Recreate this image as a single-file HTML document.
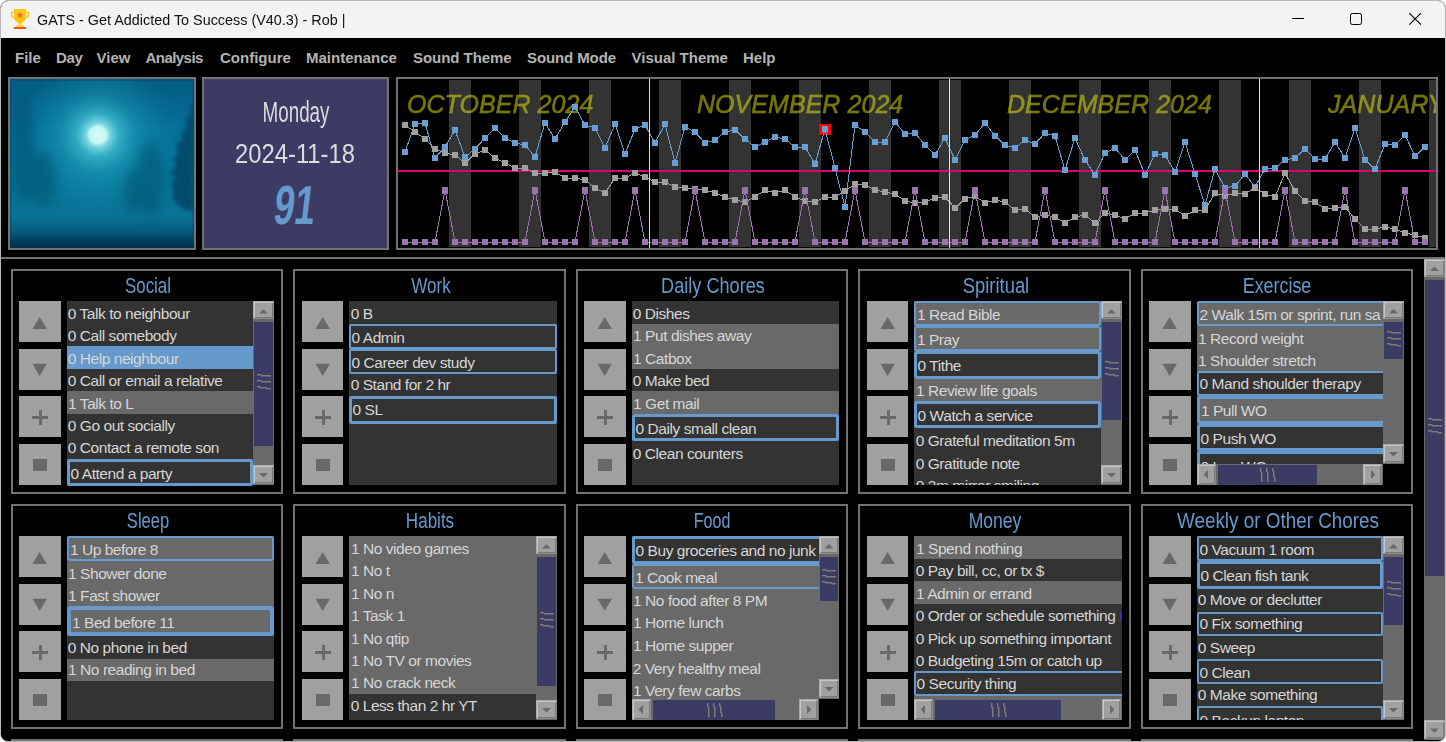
<!DOCTYPE html><html><head><meta charset="utf-8"><title>GATS</title><style>
html,body{margin:0;padding:0;}
body{width:1446px;height:742px;overflow:hidden;background:#fff;font-family:"Liberation Sans",sans-serif;position:relative;}
#win{position:absolute;left:0;top:0;width:1444px;height:740px;border:1px solid #b9b9b9;border-radius:8px;overflow:hidden;background:#000;}
#in{position:absolute;left:-1px;top:-1px;width:1446px;height:742px;}
.abs{position:absolute;}
#tb{position:absolute;left:0;top:0;width:1446px;height:38px;background:#f3f3f3;}
#title{position:absolute;left:37px;top:10.6px;font-size:15.4px;color:#111;white-space:nowrap;line-height:18px;transform:scaleX(.934);transform-origin:0 0;}
.menu{position:absolute;top:49px;font-weight:bold;font-size:15px;color:#b4b4b4;line-height:18px;white-space:nowrap;}
.box{position:absolute;box-sizing:border-box;border:2px solid #727272;}
.panel{position:absolute;box-sizing:border-box;border:2px solid #727272;}
.pt{position:absolute;color:#6699cc;font-size:22.5px;line-height:26px;white-space:nowrap;text-align:center;width:300px;margin-left:-150px;}
.btn{position:absolute;background:#a0a0a0;}
.list{position:absolute;overflow:hidden;background:#333;}
.it{position:absolute;box-sizing:border-box;}
.tx{position:absolute;white-space:nowrap;font-size:15.5px;line-height:17px;letter-spacing:-0.45px;color:#d6d6d6;}
.g{background:#696969;}
.d{background:#333;}
.s{background:#6699cc;}
.bx{border-style:solid;border-color:#6699cc;border-radius:2px;}
.sb{position:absolute;background:#696969;}
.sbb{position:absolute;box-sizing:border-box;background:#a0a0a0;border:1px solid;border-color:#aaa #8c8c8c #8c8c8c #aaa;box-shadow:inset 1px 1px 0 #c6c6c6,inset -1px -1px 0 #7a7a7a;}
.th{position:absolute;background:#3c3b64;}
</style></head><body><div id="win"><div id="in">
<div id="tb"></div>
<div id="title">GATS - Get Addicted To Success (V40.3) - Rob |</div>
<svg class="abs" style="left:10px;top:8px" width="20" height="22" viewBox="0 0 20 22">
<path d="M4 1h12v8.500c0 1.500-1 3-4.200 5.800h-3.600C5 12.500 4 11 4 9.500z" fill="#fbc710"/>
<path d="M4 4.500H1.500v2.500c0 1.500 1 2.500 2.500 2.500M16 4.500h2.500v2.500c0 1.500-1 2.500-2.500 2.500" fill="none" stroke="#fbc710" stroke-width="1.300"/>
<rect x="9" y="15" width="2" height="2.500" fill="#fbc710"/>
<rect x="6" y="17" width="8" height="2" fill="#fdd835"/>
<rect x="4" y="19" width="12" height="2" fill="#f4511e"/>
<path d="M10 4l1 2.100 2.200.2-1.700 1.500.6 2.200L10 8.800 7.900 10l.6-2.200L6.800 6.300l2.200-.2z" fill="#f4622a"/>
</svg>
<svg class="abs" style="left:1280px;top:0" width="166" height="38" viewBox="0 0 166 38">
<path d="M12 18.500h12" stroke="#000" stroke-width="1" fill="none"/>
<rect x="70.500" y="13.500" width="11" height="11" rx="1.800" fill="none" stroke="#000" stroke-width="1"/>
<path d="M129.300 13.100l11.600 11.600M140.900 13.100l-11.600 11.600" stroke="#000" stroke-width="1.100" fill="none"/>
</svg>
<div class="menu" style="left:15px;letter-spacing:0px">File</div>
<div class="menu" style="left:56px;letter-spacing:-0.3px">Day</div>
<div class="menu" style="left:96.5px;letter-spacing:0px">View</div>
<div class="menu" style="left:145.5px;letter-spacing:-0.55px">Analysis</div>
<div class="menu" style="left:220px;letter-spacing:0px">Configure</div>
<div class="menu" style="left:306px;letter-spacing:0px">Maintenance</div>
<div class="menu" style="left:413px;letter-spacing:-0.05px">Sound Theme</div>
<div class="menu" style="left:527px;letter-spacing:-0.1px">Sound Mode</div>
<div class="menu" style="left:631.5px;letter-spacing:0px">Visual Theme</div>
<div class="menu" style="left:743px;letter-spacing:0px">Help</div>
<div class="box" style="left:8px;top:77px;width:188px;height:173px;overflow:hidden;background:#0a5a78"><svg class="abs" style="left:0;top:0" width="184" height="169" viewBox="0 0 184 169">
<defs>
<linearGradient id="sky" x1="0" y1="0" x2="0" y2="1">
<stop offset="0" stop-color="#045a82"/><stop offset=".3" stop-color="#06709a"/><stop offset=".6" stop-color="#08769a"/><stop offset=".82" stop-color="#097296"/><stop offset=".9" stop-color="#065c80"/><stop offset=".95" stop-color="#044262"/><stop offset="1" stop-color="#032b48"/>
</linearGradient>
<radialGradient id="glow" cx="88" cy="56" r="80" gradientUnits="userSpaceOnUse">
<stop offset="0" stop-color="#d8fbfb"/><stop offset=".105" stop-color="#c4f4f4"/><stop offset=".15" stop-color="#7fdbe3" stop-opacity=".95"/><stop offset=".27" stop-color="#3fbfd2" stop-opacity=".75"/><stop offset=".5" stop-color="#1ea5be" stop-opacity=".42"/><stop offset="1" stop-color="#0a88a4" stop-opacity="0"/>
</radialGradient>
<filter id="bl" x="-30%" y="-30%" width="160%" height="160%"><feGaussianBlur stdDeviation="5"/></filter>
<filter id="bl2" x="-30%" y="-30%" width="160%" height="160%"><feGaussianBlur stdDeviation="2.200"/></filter>
</defs>
<rect width="184" height="169" fill="url(#sky)"/>
<rect width="184" height="169" fill="url(#glow)"/>
<g filter="url(#bl)" fill="#04506c" opacity=".5">
<ellipse cx="12" cy="70" rx="13" ry="55"/><ellipse cx="32" cy="100" rx="14" ry="28"/>
<ellipse cx="140" cy="100" rx="14" ry="38"/><ellipse cx="122" cy="112" rx="8" ry="22"/>
</g>
<g filter="url(#bl2)" fill="#033a58" opacity=".7">
<path d="M184 22l-5 9 3 2-7 10 4 2-9 11 4 2-9 11 5 3-8 10 5 3-7 10 5 2-4 10 3 4-2 8c6 8 14 14 22 12z"/>
</g>
<rect x="0" y="0" width="184" height="169" fill="none" stroke="#03405c" stroke-opacity=".3" stroke-width="4"/>
</svg>
</div>
<div class="box" style="left:202px;top:77px;width:187px;height:173px;background:#3c3b64"></div>
<div class="abs" style="left:95.5px;top:97.11px;width:400px;text-align:center;white-space:nowrap;font-size:30px;line-height:30px;color:#dcdcdc;font-weight:normal;transform:scaleX(0.628);transform-origin:50% 50%">Monday</div>
<div class="abs" style="left:95px;top:140.64px;width:400px;text-align:center;white-space:nowrap;font-size:27px;line-height:27px;color:#dcdcdc;font-weight:normal;transform:scaleX(0.882);transform-origin:50% 50%">2024-11-18</div>
<div class="abs" style="left:95px;top:178.44px;width:400px;text-align:center;white-space:nowrap;font-size:55px;line-height:55px;color:#6699cc;font-weight:bold;transform:skewX(-7deg) scaleX(0.670);transform-origin:50% 50%">91</div>
<div class="box" style="left:396px;top:77px;width:1042px;height:173px;background:#000"></div>
<svg class="abs" style="left:398px;top:79px" width="1038" height="169" viewBox="398 79 1038 169" shape-rendering="crispEdges"><rect x="449" y="80" width="22" height="167" fill="#333"/><rect x="519" y="80" width="22" height="167" fill="#333"/><rect x="589" y="80" width="22" height="167" fill="#333"/><rect x="659" y="80" width="22" height="167" fill="#333"/><rect x="729" y="80" width="22" height="167" fill="#333"/><rect x="799" y="80" width="22" height="167" fill="#333"/><rect x="869" y="80" width="22" height="167" fill="#333"/><rect x="939" y="80" width="22" height="167" fill="#333"/><rect x="1009" y="80" width="22" height="167" fill="#333"/><rect x="1079" y="80" width="22" height="167" fill="#333"/><rect x="1149" y="80" width="22" height="167" fill="#333"/><rect x="1219" y="80" width="22" height="167" fill="#333"/><rect x="1289" y="80" width="22" height="167" fill="#333"/><rect x="1359" y="80" width="22" height="167" fill="#333"/><rect x="1429" y="80" width="7" height="167" fill="#333"/><text x="407" y="113" font-family="Liberation Sans, sans-serif" font-style="italic" font-size="25" letter-spacing="0.05" fill="#ffff00" stroke="#ffff00" stroke-width="0.45" opacity="0.47" shape-rendering="auto">OCTOBER 2024</text><text x="697" y="113" font-family="Liberation Sans, sans-serif" font-style="italic" font-size="25" letter-spacing="0.05" fill="#ffff00" stroke="#ffff00" stroke-width="0.45" opacity="0.47" shape-rendering="auto">NOVEMBER 2024</text><text x="1007" y="113" font-family="Liberation Sans, sans-serif" font-style="italic" font-size="25" letter-spacing="0.05" fill="#ffff00" stroke="#ffff00" stroke-width="0.45" opacity="0.47" shape-rendering="auto">DECEMBER 2024</text><text x="1328" y="113" font-family="Liberation Sans, sans-serif" font-style="italic" font-size="25" letter-spacing="0.05" fill="#ffff00" stroke="#ffff00" stroke-width="0.45" opacity="0.47" shape-rendering="auto">JANUARY 2025</text><rect x="398" y="170" width="1038" height="2" fill="#d6006e"/><rect x="819" y="124" width="12" height="11" fill="#f00"/><polyline points="405,152 415,124 425,123 435,158 445,147 455,130 465,157 475,149 485,138 495,128 505,138 515,143 525,145 535,157 545,123 555,139 565,122 575,107 585,125 595,128 605,148 615,124 625,154 635,129 645,125 655,143 665,124 675,163 685,127 695,132 705,143 715,140 725,132 735,130 745,139 755,147 765,142 775,137 785,139 795,147 805,147 815,164 825,129 835,168 845,207 855,125 865,132 875,142 885,142 895,122 905,134 915,133 925,145 935,155 945,138 955,160 965,140 975,135 985,123 995,136 1005,145 1015,148 1025,140 1035,144 1045,133 1055,136 1065,170 1075,138 1085,160 1095,175 1105,153 1115,148 1125,160 1135,150 1145,175 1155,154 1165,155 1175,172 1185,142 1195,174 1205,205 1215,169 1225,188 1235,186 1245,174 1255,187 1265,169 1275,168 1285,160 1295,158 1305,149 1315,159 1325,159 1335,142 1345,158 1355,128 1365,160 1375,169 1385,144 1395,145 1405,135 1415,156 1425,147" fill="none" stroke="#689ed1" stroke-width="1"/><rect x="402" y="149" width="6" height="6" fill="#689ed1"/><rect x="412" y="121" width="6" height="6" fill="#689ed1"/><rect x="422" y="120" width="6" height="6" fill="#689ed1"/><rect x="432" y="155" width="6" height="6" fill="#689ed1"/><rect x="442" y="144" width="6" height="6" fill="#689ed1"/><rect x="452" y="127" width="6" height="6" fill="#689ed1"/><rect x="462" y="154" width="6" height="6" fill="#689ed1"/><rect x="472" y="146" width="6" height="6" fill="#689ed1"/><rect x="482" y="135" width="6" height="6" fill="#689ed1"/><rect x="492" y="125" width="6" height="6" fill="#689ed1"/><rect x="502" y="135" width="6" height="6" fill="#689ed1"/><rect x="512" y="140" width="6" height="6" fill="#689ed1"/><rect x="522" y="142" width="6" height="6" fill="#689ed1"/><rect x="532" y="154" width="6" height="6" fill="#689ed1"/><rect x="542" y="120" width="6" height="6" fill="#689ed1"/><rect x="552" y="136" width="6" height="6" fill="#689ed1"/><rect x="562" y="119" width="6" height="6" fill="#689ed1"/><rect x="572" y="104" width="6" height="6" fill="#689ed1"/><rect x="582" y="122" width="6" height="6" fill="#689ed1"/><rect x="592" y="125" width="6" height="6" fill="#689ed1"/><rect x="602" y="145" width="6" height="6" fill="#689ed1"/><rect x="612" y="121" width="6" height="6" fill="#689ed1"/><rect x="622" y="151" width="6" height="6" fill="#689ed1"/><rect x="632" y="126" width="6" height="6" fill="#689ed1"/><rect x="642" y="122" width="6" height="6" fill="#689ed1"/><rect x="652" y="140" width="6" height="6" fill="#689ed1"/><rect x="662" y="121" width="6" height="6" fill="#689ed1"/><rect x="672" y="160" width="6" height="6" fill="#689ed1"/><rect x="682" y="124" width="6" height="6" fill="#689ed1"/><rect x="692" y="129" width="6" height="6" fill="#689ed1"/><rect x="702" y="140" width="6" height="6" fill="#689ed1"/><rect x="712" y="137" width="6" height="6" fill="#689ed1"/><rect x="722" y="129" width="6" height="6" fill="#689ed1"/><rect x="732" y="127" width="6" height="6" fill="#689ed1"/><rect x="742" y="136" width="6" height="6" fill="#689ed1"/><rect x="752" y="144" width="6" height="6" fill="#689ed1"/><rect x="762" y="139" width="6" height="6" fill="#689ed1"/><rect x="772" y="134" width="6" height="6" fill="#689ed1"/><rect x="782" y="136" width="6" height="6" fill="#689ed1"/><rect x="792" y="144" width="6" height="6" fill="#689ed1"/><rect x="802" y="144" width="6" height="6" fill="#689ed1"/><rect x="812" y="161" width="6" height="6" fill="#689ed1"/><rect x="822" y="126" width="6" height="6" fill="#689ed1"/><rect x="832" y="165" width="6" height="6" fill="#689ed1"/><rect x="842" y="204" width="6" height="6" fill="#689ed1"/><rect x="852" y="122" width="6" height="6" fill="#689ed1"/><rect x="862" y="129" width="6" height="6" fill="#689ed1"/><rect x="872" y="139" width="6" height="6" fill="#689ed1"/><rect x="882" y="139" width="6" height="6" fill="#689ed1"/><rect x="892" y="119" width="6" height="6" fill="#689ed1"/><rect x="902" y="131" width="6" height="6" fill="#689ed1"/><rect x="912" y="130" width="6" height="6" fill="#689ed1"/><rect x="922" y="142" width="6" height="6" fill="#689ed1"/><rect x="932" y="152" width="6" height="6" fill="#689ed1"/><rect x="942" y="135" width="6" height="6" fill="#689ed1"/><rect x="952" y="157" width="6" height="6" fill="#689ed1"/><rect x="962" y="137" width="6" height="6" fill="#689ed1"/><rect x="972" y="132" width="6" height="6" fill="#689ed1"/><rect x="982" y="120" width="6" height="6" fill="#689ed1"/><rect x="992" y="133" width="6" height="6" fill="#689ed1"/><rect x="1002" y="142" width="6" height="6" fill="#689ed1"/><rect x="1012" y="145" width="6" height="6" fill="#689ed1"/><rect x="1022" y="137" width="6" height="6" fill="#689ed1"/><rect x="1032" y="141" width="6" height="6" fill="#689ed1"/><rect x="1042" y="130" width="6" height="6" fill="#689ed1"/><rect x="1052" y="133" width="6" height="6" fill="#689ed1"/><rect x="1062" y="167" width="6" height="6" fill="#689ed1"/><rect x="1072" y="135" width="6" height="6" fill="#689ed1"/><rect x="1082" y="157" width="6" height="6" fill="#689ed1"/><rect x="1092" y="172" width="6" height="6" fill="#689ed1"/><rect x="1102" y="150" width="6" height="6" fill="#689ed1"/><rect x="1112" y="145" width="6" height="6" fill="#689ed1"/><rect x="1122" y="157" width="6" height="6" fill="#689ed1"/><rect x="1132" y="147" width="6" height="6" fill="#689ed1"/><rect x="1142" y="172" width="6" height="6" fill="#689ed1"/><rect x="1152" y="151" width="6" height="6" fill="#689ed1"/><rect x="1162" y="152" width="6" height="6" fill="#689ed1"/><rect x="1172" y="169" width="6" height="6" fill="#689ed1"/><rect x="1182" y="139" width="6" height="6" fill="#689ed1"/><rect x="1192" y="171" width="6" height="6" fill="#689ed1"/><rect x="1202" y="202" width="6" height="6" fill="#689ed1"/><rect x="1212" y="166" width="6" height="6" fill="#689ed1"/><rect x="1222" y="185" width="6" height="6" fill="#689ed1"/><rect x="1232" y="183" width="6" height="6" fill="#689ed1"/><rect x="1242" y="171" width="6" height="6" fill="#689ed1"/><rect x="1252" y="184" width="6" height="6" fill="#689ed1"/><rect x="1262" y="166" width="6" height="6" fill="#689ed1"/><rect x="1272" y="165" width="6" height="6" fill="#689ed1"/><rect x="1282" y="157" width="6" height="6" fill="#689ed1"/><rect x="1292" y="155" width="6" height="6" fill="#689ed1"/><rect x="1302" y="146" width="6" height="6" fill="#689ed1"/><rect x="1312" y="156" width="6" height="6" fill="#689ed1"/><rect x="1322" y="156" width="6" height="6" fill="#689ed1"/><rect x="1332" y="139" width="6" height="6" fill="#689ed1"/><rect x="1342" y="155" width="6" height="6" fill="#689ed1"/><rect x="1352" y="125" width="6" height="6" fill="#689ed1"/><rect x="1362" y="157" width="6" height="6" fill="#689ed1"/><rect x="1372" y="166" width="6" height="6" fill="#689ed1"/><rect x="1382" y="141" width="6" height="6" fill="#689ed1"/><rect x="1392" y="142" width="6" height="6" fill="#689ed1"/><rect x="1402" y="132" width="6" height="6" fill="#689ed1"/><rect x="1412" y="153" width="6" height="6" fill="#689ed1"/><rect x="1422" y="144" width="6" height="6" fill="#689ed1"/><polyline points="405,125 415,132 425,139 435,149 445,153 455,155 465,163 475,154 485,150 495,158 505,163 515,168 525,168 535,173 545,173 555,172 565,178 575,178 585,180 595,188 605,193 615,178 625,178 635,173 645,177 655,182 665,182 675,187 685,188 695,189 705,190 715,193 725,197 735,200 745,202 755,197 765,190 775,193 785,190 795,197 805,201 815,202 825,197 835,197 845,191 855,184 865,185 875,190 885,192 895,194 905,201 915,203 925,202 935,198 945,197 955,208 965,199 975,196 985,203 995,200 1005,202 1015,210 1025,209 1035,217 1045,215 1055,217 1065,223 1075,217 1085,215 1095,223 1105,213 1115,215 1125,219 1135,213 1145,213 1155,210 1165,209 1175,209 1185,216 1195,210 1205,210 1215,193 1225,196 1235,193 1245,194 1255,188 1265,194 1275,197 1285,173 1295,191 1305,201 1315,202 1325,209 1335,208 1345,207 1355,219 1365,229 1375,229 1385,227 1395,229 1405,233 1415,235 1425,238" fill="none" stroke="#a0a0a0" stroke-width="1"/><rect x="402" y="122" width="6" height="6" fill="#a0a0a0"/><rect x="412" y="129" width="6" height="6" fill="#a0a0a0"/><rect x="422" y="136" width="6" height="6" fill="#a0a0a0"/><rect x="432" y="146" width="6" height="6" fill="#a0a0a0"/><rect x="442" y="150" width="6" height="6" fill="#a0a0a0"/><rect x="452" y="152" width="6" height="6" fill="#a0a0a0"/><rect x="462" y="160" width="6" height="6" fill="#a0a0a0"/><rect x="472" y="151" width="6" height="6" fill="#a0a0a0"/><rect x="482" y="147" width="6" height="6" fill="#a0a0a0"/><rect x="492" y="155" width="6" height="6" fill="#a0a0a0"/><rect x="502" y="160" width="6" height="6" fill="#a0a0a0"/><rect x="512" y="165" width="6" height="6" fill="#a0a0a0"/><rect x="522" y="165" width="6" height="6" fill="#a0a0a0"/><rect x="532" y="170" width="6" height="6" fill="#a0a0a0"/><rect x="542" y="170" width="6" height="6" fill="#a0a0a0"/><rect x="552" y="169" width="6" height="6" fill="#a0a0a0"/><rect x="562" y="175" width="6" height="6" fill="#a0a0a0"/><rect x="572" y="175" width="6" height="6" fill="#a0a0a0"/><rect x="582" y="177" width="6" height="6" fill="#a0a0a0"/><rect x="592" y="185" width="6" height="6" fill="#a0a0a0"/><rect x="602" y="190" width="6" height="6" fill="#a0a0a0"/><rect x="612" y="175" width="6" height="6" fill="#a0a0a0"/><rect x="622" y="175" width="6" height="6" fill="#a0a0a0"/><rect x="632" y="170" width="6" height="6" fill="#a0a0a0"/><rect x="642" y="174" width="6" height="6" fill="#a0a0a0"/><rect x="652" y="179" width="6" height="6" fill="#a0a0a0"/><rect x="662" y="179" width="6" height="6" fill="#a0a0a0"/><rect x="672" y="184" width="6" height="6" fill="#a0a0a0"/><rect x="682" y="185" width="6" height="6" fill="#a0a0a0"/><rect x="692" y="186" width="6" height="6" fill="#a0a0a0"/><rect x="702" y="187" width="6" height="6" fill="#a0a0a0"/><rect x="712" y="190" width="6" height="6" fill="#a0a0a0"/><rect x="722" y="194" width="6" height="6" fill="#a0a0a0"/><rect x="732" y="197" width="6" height="6" fill="#a0a0a0"/><rect x="742" y="199" width="6" height="6" fill="#a0a0a0"/><rect x="752" y="194" width="6" height="6" fill="#a0a0a0"/><rect x="762" y="187" width="6" height="6" fill="#a0a0a0"/><rect x="772" y="190" width="6" height="6" fill="#a0a0a0"/><rect x="782" y="187" width="6" height="6" fill="#a0a0a0"/><rect x="792" y="194" width="6" height="6" fill="#a0a0a0"/><rect x="802" y="198" width="6" height="6" fill="#a0a0a0"/><rect x="812" y="199" width="6" height="6" fill="#a0a0a0"/><rect x="822" y="194" width="6" height="6" fill="#a0a0a0"/><rect x="832" y="194" width="6" height="6" fill="#a0a0a0"/><rect x="842" y="188" width="6" height="6" fill="#a0a0a0"/><rect x="852" y="181" width="6" height="6" fill="#a0a0a0"/><rect x="862" y="182" width="6" height="6" fill="#a0a0a0"/><rect x="872" y="187" width="6" height="6" fill="#a0a0a0"/><rect x="882" y="189" width="6" height="6" fill="#a0a0a0"/><rect x="892" y="191" width="6" height="6" fill="#a0a0a0"/><rect x="902" y="198" width="6" height="6" fill="#a0a0a0"/><rect x="912" y="200" width="6" height="6" fill="#a0a0a0"/><rect x="922" y="199" width="6" height="6" fill="#a0a0a0"/><rect x="932" y="195" width="6" height="6" fill="#a0a0a0"/><rect x="942" y="194" width="6" height="6" fill="#a0a0a0"/><rect x="952" y="205" width="6" height="6" fill="#a0a0a0"/><rect x="962" y="196" width="6" height="6" fill="#a0a0a0"/><rect x="972" y="193" width="6" height="6" fill="#a0a0a0"/><rect x="982" y="200" width="6" height="6" fill="#a0a0a0"/><rect x="992" y="197" width="6" height="6" fill="#a0a0a0"/><rect x="1002" y="199" width="6" height="6" fill="#a0a0a0"/><rect x="1012" y="207" width="6" height="6" fill="#a0a0a0"/><rect x="1022" y="206" width="6" height="6" fill="#a0a0a0"/><rect x="1032" y="214" width="6" height="6" fill="#a0a0a0"/><rect x="1042" y="212" width="6" height="6" fill="#a0a0a0"/><rect x="1052" y="214" width="6" height="6" fill="#a0a0a0"/><rect x="1062" y="220" width="6" height="6" fill="#a0a0a0"/><rect x="1072" y="214" width="6" height="6" fill="#a0a0a0"/><rect x="1082" y="212" width="6" height="6" fill="#a0a0a0"/><rect x="1092" y="220" width="6" height="6" fill="#a0a0a0"/><rect x="1102" y="210" width="6" height="6" fill="#a0a0a0"/><rect x="1112" y="212" width="6" height="6" fill="#a0a0a0"/><rect x="1122" y="216" width="6" height="6" fill="#a0a0a0"/><rect x="1132" y="210" width="6" height="6" fill="#a0a0a0"/><rect x="1142" y="210" width="6" height="6" fill="#a0a0a0"/><rect x="1152" y="207" width="6" height="6" fill="#a0a0a0"/><rect x="1162" y="206" width="6" height="6" fill="#a0a0a0"/><rect x="1172" y="206" width="6" height="6" fill="#a0a0a0"/><rect x="1182" y="213" width="6" height="6" fill="#a0a0a0"/><rect x="1192" y="207" width="6" height="6" fill="#a0a0a0"/><rect x="1202" y="207" width="6" height="6" fill="#a0a0a0"/><rect x="1212" y="190" width="6" height="6" fill="#a0a0a0"/><rect x="1222" y="193" width="6" height="6" fill="#a0a0a0"/><rect x="1232" y="190" width="6" height="6" fill="#a0a0a0"/><rect x="1242" y="191" width="6" height="6" fill="#a0a0a0"/><rect x="1252" y="185" width="6" height="6" fill="#a0a0a0"/><rect x="1262" y="191" width="6" height="6" fill="#a0a0a0"/><rect x="1272" y="194" width="6" height="6" fill="#a0a0a0"/><rect x="1282" y="170" width="6" height="6" fill="#a0a0a0"/><rect x="1292" y="188" width="6" height="6" fill="#a0a0a0"/><rect x="1302" y="198" width="6" height="6" fill="#a0a0a0"/><rect x="1312" y="199" width="6" height="6" fill="#a0a0a0"/><rect x="1322" y="206" width="6" height="6" fill="#a0a0a0"/><rect x="1332" y="205" width="6" height="6" fill="#a0a0a0"/><rect x="1342" y="204" width="6" height="6" fill="#a0a0a0"/><rect x="1352" y="216" width="6" height="6" fill="#a0a0a0"/><rect x="1362" y="226" width="6" height="6" fill="#a0a0a0"/><rect x="1372" y="226" width="6" height="6" fill="#a0a0a0"/><rect x="1382" y="224" width="6" height="6" fill="#a0a0a0"/><rect x="1392" y="226" width="6" height="6" fill="#a0a0a0"/><rect x="1402" y="230" width="6" height="6" fill="#a0a0a0"/><rect x="1412" y="232" width="6" height="6" fill="#a0a0a0"/><rect x="1422" y="235" width="6" height="6" fill="#a0a0a0"/><polyline points="405,242 415,242 425,242 435,242 445,190 455,242 465,242 475,242 485,242 495,242 505,242 515,242 525,242 535,190 545,242 555,242 565,242 575,242 585,190 595,242 605,242 615,242 625,242 635,190 645,242 655,242 665,242 675,242 685,242 695,190 705,242 715,242 725,242 735,242 745,190 755,242 765,242 775,242 785,242 795,242 805,190 815,242 825,242 835,242 845,242 855,190 865,242 875,242 885,242 895,242 905,242 915,190 925,242 935,242 945,242 955,242 965,242 975,190 985,242 995,242 1005,242 1015,242 1025,242 1035,242 1045,190 1055,242 1065,242 1075,242 1085,242 1095,242 1105,190 1115,242 1125,242 1135,242 1145,242 1155,242 1165,190 1175,242 1185,242 1195,242 1205,242 1215,242 1225,190 1235,242 1245,242 1255,242 1265,242 1275,242 1285,190 1295,242 1305,242 1315,242 1325,242 1335,242 1345,190 1355,242 1365,242 1375,242 1385,242 1395,242 1405,190 1415,242 1425,242" fill="none" stroke="#9b73af" stroke-width="1"/><rect x="402" y="239" width="6" height="6" fill="#9b73af"/><rect x="412" y="239" width="6" height="6" fill="#9b73af"/><rect x="422" y="239" width="6" height="6" fill="#9b73af"/><rect x="432" y="239" width="6" height="6" fill="#9b73af"/><rect x="442" y="187" width="6" height="7" fill="#9b73af"/><rect x="452" y="239" width="6" height="6" fill="#9b73af"/><rect x="462" y="239" width="6" height="6" fill="#9b73af"/><rect x="472" y="239" width="6" height="6" fill="#9b73af"/><rect x="482" y="239" width="6" height="6" fill="#9b73af"/><rect x="492" y="239" width="6" height="6" fill="#9b73af"/><rect x="502" y="239" width="6" height="6" fill="#9b73af"/><rect x="512" y="239" width="6" height="6" fill="#9b73af"/><rect x="522" y="239" width="6" height="6" fill="#9b73af"/><rect x="532" y="187" width="6" height="7" fill="#9b73af"/><rect x="542" y="239" width="6" height="6" fill="#9b73af"/><rect x="552" y="239" width="6" height="6" fill="#9b73af"/><rect x="562" y="239" width="6" height="6" fill="#9b73af"/><rect x="572" y="239" width="6" height="6" fill="#9b73af"/><rect x="582" y="187" width="6" height="7" fill="#9b73af"/><rect x="592" y="239" width="6" height="6" fill="#9b73af"/><rect x="602" y="239" width="6" height="6" fill="#9b73af"/><rect x="612" y="239" width="6" height="6" fill="#9b73af"/><rect x="622" y="239" width="6" height="6" fill="#9b73af"/><rect x="632" y="187" width="6" height="7" fill="#9b73af"/><rect x="642" y="239" width="6" height="6" fill="#9b73af"/><rect x="652" y="239" width="6" height="6" fill="#9b73af"/><rect x="662" y="239" width="6" height="6" fill="#9b73af"/><rect x="672" y="239" width="6" height="6" fill="#9b73af"/><rect x="682" y="239" width="6" height="6" fill="#9b73af"/><rect x="692" y="187" width="6" height="7" fill="#9b73af"/><rect x="702" y="239" width="6" height="6" fill="#9b73af"/><rect x="712" y="239" width="6" height="6" fill="#9b73af"/><rect x="722" y="239" width="6" height="6" fill="#9b73af"/><rect x="732" y="239" width="6" height="6" fill="#9b73af"/><rect x="742" y="187" width="6" height="7" fill="#9b73af"/><rect x="752" y="239" width="6" height="6" fill="#9b73af"/><rect x="762" y="239" width="6" height="6" fill="#9b73af"/><rect x="772" y="239" width="6" height="6" fill="#9b73af"/><rect x="782" y="239" width="6" height="6" fill="#9b73af"/><rect x="792" y="239" width="6" height="6" fill="#9b73af"/><rect x="802" y="187" width="6" height="7" fill="#9b73af"/><rect x="812" y="239" width="6" height="6" fill="#9b73af"/><rect x="822" y="239" width="6" height="6" fill="#9b73af"/><rect x="832" y="239" width="6" height="6" fill="#9b73af"/><rect x="842" y="239" width="6" height="6" fill="#9b73af"/><rect x="852" y="187" width="6" height="7" fill="#9b73af"/><rect x="862" y="239" width="6" height="6" fill="#9b73af"/><rect x="872" y="239" width="6" height="6" fill="#9b73af"/><rect x="882" y="239" width="6" height="6" fill="#9b73af"/><rect x="892" y="239" width="6" height="6" fill="#9b73af"/><rect x="902" y="239" width="6" height="6" fill="#9b73af"/><rect x="912" y="187" width="6" height="7" fill="#9b73af"/><rect x="922" y="239" width="6" height="6" fill="#9b73af"/><rect x="932" y="239" width="6" height="6" fill="#9b73af"/><rect x="942" y="239" width="6" height="6" fill="#9b73af"/><rect x="952" y="239" width="6" height="6" fill="#9b73af"/><rect x="962" y="239" width="6" height="6" fill="#9b73af"/><rect x="972" y="187" width="6" height="7" fill="#9b73af"/><rect x="982" y="239" width="6" height="6" fill="#9b73af"/><rect x="992" y="239" width="6" height="6" fill="#9b73af"/><rect x="1002" y="239" width="6" height="6" fill="#9b73af"/><rect x="1012" y="239" width="6" height="6" fill="#9b73af"/><rect x="1022" y="239" width="6" height="6" fill="#9b73af"/><rect x="1032" y="239" width="6" height="6" fill="#9b73af"/><rect x="1042" y="187" width="6" height="7" fill="#9b73af"/><rect x="1052" y="239" width="6" height="6" fill="#9b73af"/><rect x="1062" y="239" width="6" height="6" fill="#9b73af"/><rect x="1072" y="239" width="6" height="6" fill="#9b73af"/><rect x="1082" y="239" width="6" height="6" fill="#9b73af"/><rect x="1092" y="239" width="6" height="6" fill="#9b73af"/><rect x="1102" y="187" width="6" height="7" fill="#9b73af"/><rect x="1112" y="239" width="6" height="6" fill="#9b73af"/><rect x="1122" y="239" width="6" height="6" fill="#9b73af"/><rect x="1132" y="239" width="6" height="6" fill="#9b73af"/><rect x="1142" y="239" width="6" height="6" fill="#9b73af"/><rect x="1152" y="239" width="6" height="6" fill="#9b73af"/><rect x="1162" y="187" width="6" height="7" fill="#9b73af"/><rect x="1172" y="239" width="6" height="6" fill="#9b73af"/><rect x="1182" y="239" width="6" height="6" fill="#9b73af"/><rect x="1192" y="239" width="6" height="6" fill="#9b73af"/><rect x="1202" y="239" width="6" height="6" fill="#9b73af"/><rect x="1212" y="239" width="6" height="6" fill="#9b73af"/><rect x="1222" y="187" width="6" height="7" fill="#9b73af"/><rect x="1232" y="239" width="6" height="6" fill="#9b73af"/><rect x="1242" y="239" width="6" height="6" fill="#9b73af"/><rect x="1252" y="239" width="6" height="6" fill="#9b73af"/><rect x="1262" y="239" width="6" height="6" fill="#9b73af"/><rect x="1272" y="239" width="6" height="6" fill="#9b73af"/><rect x="1282" y="187" width="6" height="7" fill="#9b73af"/><rect x="1292" y="239" width="6" height="6" fill="#9b73af"/><rect x="1302" y="239" width="6" height="6" fill="#9b73af"/><rect x="1312" y="239" width="6" height="6" fill="#9b73af"/><rect x="1322" y="239" width="6" height="6" fill="#9b73af"/><rect x="1332" y="239" width="6" height="6" fill="#9b73af"/><rect x="1342" y="187" width="6" height="7" fill="#9b73af"/><rect x="1352" y="239" width="6" height="6" fill="#9b73af"/><rect x="1362" y="239" width="6" height="6" fill="#9b73af"/><rect x="1372" y="239" width="6" height="6" fill="#9b73af"/><rect x="1382" y="239" width="6" height="6" fill="#9b73af"/><rect x="1392" y="239" width="6" height="6" fill="#9b73af"/><rect x="1402" y="187" width="6" height="7" fill="#9b73af"/><rect x="1412" y="239" width="6" height="6" fill="#9b73af"/><rect x="1422" y="239" width="6" height="6" fill="#9b73af"/><rect x="649" y="79" width="1" height="169" fill="#ffff00"/><rect x="949" y="79" width="1" height="169" fill="#ffff00"/><rect x="1259" y="79" width="1" height="169" fill="#ffff00"/></svg>
<div class="abs" style="left:1px;top:257px;width:1444px;height:2px;background:#727272"></div>
<div class="sb" style="left:1424px;top:259px;width:21px;height:481px"></div><div class="sbb" style="left:1424px;top:259px;width:21px;height:18px"></div><div class="sbb" style="left:1424px;top:720px;width:21px;height:19px"></div><div class="th" style="left:1425px;top:280px;width:19px;height:296px"></div><svg class="abs" style="left:1427.5px;top:418.0px" width="14" height="16" viewBox="0 0 14 16"><path d="M0 .75h4.500M4 1.750h10M0 6.750h4.500M4 7.750h10M0 12.750h3.500M3 13.750h7M9.500 14.750h4.500" stroke="#7d7d73" stroke-width="1.500" fill="none"/></svg>
<div class="panel" style="left:11px;top:269px;width:272px;height:225px"></div>
<div class="pt" style="left:148.4px;top:272.9px;transform:scaleX(0.750)">Social</div>
<div class="btn" style="left:19px;top:301px;width:42px;height:41px"></div>
<div class="btn" style="left:19px;top:349px;width:42px;height:41px"></div>
<div class="btn" style="left:19px;top:396px;width:42px;height:41px"></div>
<div class="btn" style="left:19px;top:444px;width:42px;height:41px"></div>


<div class="abs" style="left:32px;top:416px;width:16px;height:3px;background:#696969"></div>
<div class="abs" style="left:38.5px;top:410px;width:3px;height:15px;background:#696969"></div>
<div class="abs" style="left:33px;top:459px;width:14px;height:12px;background:#696969"></div>
<div class="list" style="left:67px;top:301px;width:186px;height:185px">
<div class="it d" style="left:0;top:0.0px;width:186px;height:22.5px"></div>
<div class="it d" style="left:0;top:22.5px;width:186px;height:22.5px"></div>
<div class="it s" style="left:0;top:45.0px;width:186px;height:22.5px"></div>
<div class="it d" style="left:0;top:67.5px;width:186px;height:22.5px"></div>
<div class="it g" style="left:0;top:90.0px;width:186px;height:22.5px"></div>
<div class="it d" style="left:0;top:112.5px;width:186px;height:22.5px"></div>
<div class="it d" style="left:0;top:135.0px;width:186px;height:22.5px"></div>
<div class="it d bx" style="left:0;top:158px;width:186px;height:27px;border-width:3px"></div>
<div class="tx" style="left:0.8px;top:4px">0 Talk to neighbour</div>
<div class="tx" style="left:0.8px;top:26px">0 Call somebody</div>
<div class="tx" style="left:0.8px;top:49px">0 Help neighbour</div>
<div class="tx" style="left:0.8px;top:71px">0 Call or email a relative</div>
<div class="tx" style="left:1.1px;top:94px">1 Talk to L</div>
<div class="tx" style="left:0.8px;top:116px">0 Go out socially</div>
<div class="tx" style="left:0.8px;top:138px">0 Contact a remote son</div>
<div class="tx" style="left:3.6px;top:164px">0 Attend a party</div>
</div>
<div class="sb" style="left:253px;top:301px;width:21px;height:184px"></div><div class="sbb" style="left:253px;top:301px;width:21px;height:18px"></div><div class="sbb" style="left:253px;top:465px;width:21px;height:19px"></div><div class="th" style="left:254px;top:322px;width:19px;height:124px"></div><svg class="abs" style="left:256.5px;top:374.0px" width="14" height="16" viewBox="0 0 14 16"><path d="M0 .75h4.500M4 1.750h10M0 6.750h4.500M4 7.750h10M0 12.750h3.500M3 13.750h7M9.500 14.750h4.500" stroke="#7d7d73" stroke-width="1.500" fill="none"/></svg>
<div class="panel" style="left:293px;top:269px;width:273px;height:225px"></div>
<div class="pt" style="left:431px;top:272.9px;transform:scaleX(0.760)">Work</div>
<div class="btn" style="left:302px;top:301px;width:41px;height:41px"></div>
<div class="btn" style="left:302px;top:349px;width:41px;height:41px"></div>
<div class="btn" style="left:302px;top:396px;width:41px;height:41px"></div>
<div class="btn" style="left:302px;top:444px;width:41px;height:41px"></div>


<div class="abs" style="left:315px;top:416px;width:16px;height:3px;background:#696969"></div>
<div class="abs" style="left:321.5px;top:410px;width:3px;height:15px;background:#696969"></div>
<div class="abs" style="left:316px;top:459px;width:14px;height:12px;background:#696969"></div>
<div class="list" style="left:349px;top:301px;width:208px;height:184px">
<div class="it d" style="left:0;top:0px;width:208px;height:23px"></div>
<div class="it d bx" style="left:0;top:23px;width:208px;height:25px;border-width:2px"></div>
<div class="it d bx" style="left:0;top:48px;width:208px;height:25px;border-width:2px"></div>
<div class="it d" style="left:0;top:73px;width:208px;height:22px"></div>
<div class="it d bx" style="left:0;top:95px;width:208px;height:28px;border-width:3px"></div>
<div class="tx" style="left:1.7px;top:4px">0 B</div>
<div class="tx" style="left:2.6px;top:28px">0 Admin</div>
<div class="tx" style="left:2.6px;top:53px">0 Career dev study</div>
<div class="tx" style="left:1.7px;top:75px">0 Stand for 2 hr</div>
<div class="tx" style="left:3.6px;top:100px">0 SL</div>
</div>
<div class="panel" style="left:576px;top:269px;width:272px;height:225px"></div>
<div class="pt" style="left:712.6px;top:272.9px;transform:scaleX(0.806)">Daily Chores</div>
<div class="btn" style="left:584px;top:301px;width:42px;height:41px"></div>
<div class="btn" style="left:584px;top:349px;width:42px;height:41px"></div>
<div class="btn" style="left:584px;top:396px;width:42px;height:41px"></div>
<div class="btn" style="left:584px;top:444px;width:42px;height:41px"></div>


<div class="abs" style="left:597px;top:416px;width:16px;height:3px;background:#696969"></div>
<div class="abs" style="left:603.5px;top:410px;width:3px;height:15px;background:#696969"></div>
<div class="abs" style="left:598px;top:459px;width:14px;height:12px;background:#696969"></div>
<div class="list" style="left:632px;top:301px;width:207px;height:184px">
<div class="it d" style="left:0;top:0.0px;width:207px;height:22.5px"></div>
<div class="it g" style="left:0;top:22.5px;width:207px;height:22.5px"></div>
<div class="it g" style="left:0;top:45.0px;width:207px;height:22.5px"></div>
<div class="it d" style="left:0;top:67.5px;width:207px;height:22.5px"></div>
<div class="it g" style="left:0;top:90.0px;width:207px;height:22.5px"></div>
<div class="it d bx" style="left:0;top:113px;width:207px;height:27px;border-width:3px"></div>
<div class="it d" style="left:0;top:140px;width:207px;height:23px"></div>
<div class="tx" style="left:0.8px;top:4px">0 Dishes</div>
<div class="tx" style="left:1.1px;top:26px">1 Put dishes away</div>
<div class="tx" style="left:1.1px;top:49px">1 Catbox</div>
<div class="tx" style="left:0.8px;top:71px">0 Make bed</div>
<div class="tx" style="left:1.1px;top:94px">1 Get mail</div>
<div class="tx" style="left:3.6px;top:119px">0 Daily small clean</div>
<div class="tx" style="left:0.8px;top:144px">0 Clean counters</div>
</div>
<div class="panel" style="left:858px;top:269px;width:273px;height:225px"></div>
<div class="pt" style="left:995.5px;top:272.9px;transform:scaleX(0.817)">Spiritual</div>
<div class="btn" style="left:867px;top:301px;width:41px;height:41px"></div>
<div class="btn" style="left:867px;top:349px;width:41px;height:41px"></div>
<div class="btn" style="left:867px;top:396px;width:41px;height:41px"></div>
<div class="btn" style="left:867px;top:444px;width:41px;height:41px"></div>


<div class="abs" style="left:880px;top:416px;width:16px;height:3px;background:#696969"></div>
<div class="abs" style="left:886.5px;top:410px;width:3px;height:15px;background:#696969"></div>
<div class="abs" style="left:881px;top:459px;width:14px;height:12px;background:#696969"></div>
<div class="list" style="left:914px;top:301px;width:187px;height:184px">
<div class="it g bx" style="left:0;top:0px;width:187px;height:25px;border-width:2px"></div>
<div class="it g bx" style="left:0;top:25px;width:187px;height:25px;border-width:2px"></div>
<div class="it d bx" style="left:0;top:50px;width:187px;height:28px;border-width:3px"></div>
<div class="it g" style="left:0;top:78px;width:187px;height:22.5px"></div>
<div class="it d bx" style="left:0;top:100px;width:187px;height:27px;border-width:3px"></div>
<div class="it d" style="left:0;top:127.5px;width:187px;height:22.5px"></div>
<div class="it d" style="left:0;top:150px;width:187px;height:22.5px"></div>
<div class="it d" style="left:0;top:172.5px;width:187px;height:22.5px"></div>
<div class="tx" style="left:2.9px;top:5px">1 Read Bible</div>
<div class="tx" style="left:2.9px;top:30px">1 Pray</div>
<div class="tx" style="left:3.6px;top:56px">0 Tithe</div>
<div class="tx" style="left:2.0px;top:81px">1 Review life goals</div>
<div class="tx" style="left:3.6px;top:106px">0 Watch a service</div>
<div class="tx" style="left:1.7px;top:131px">0 Grateful meditation 5m</div>
<div class="tx" style="left:1.7px;top:154px">0 Gratitude note</div>
<div class="tx" style="left:1.7px;top:176px">0 2m mirror smiling</div>
</div>
<div class="sb" style="left:1101px;top:301px;width:21px;height:184px"></div><div class="sbb" style="left:1101px;top:301px;width:21px;height:18px"></div><div class="sbb" style="left:1101px;top:465px;width:21px;height:19px"></div><div class="th" style="left:1102px;top:322px;width:19px;height:98px"></div><svg class="abs" style="left:1104.5px;top:361.0px" width="14" height="16" viewBox="0 0 14 16"><path d="M0 .75h4.500M4 1.750h10M0 6.750h4.500M4 7.750h10M0 12.750h3.500M3 13.750h7M9.500 14.750h4.500" stroke="#7d7d73" stroke-width="1.500" fill="none"/></svg>
<div class="panel" style="left:1141px;top:269px;width:272px;height:225px"></div>
<div class="pt" style="left:1276.7px;top:272.9px;transform:scaleX(0.795)">Exercise</div>
<div class="btn" style="left:1149px;top:301px;width:42px;height:41px"></div>
<div class="btn" style="left:1149px;top:349px;width:42px;height:41px"></div>
<div class="btn" style="left:1149px;top:396px;width:42px;height:41px"></div>
<div class="btn" style="left:1149px;top:444px;width:42px;height:41px"></div>


<div class="abs" style="left:1162px;top:416px;width:16px;height:3px;background:#696969"></div>
<div class="abs" style="left:1168.5px;top:410px;width:3px;height:15px;background:#696969"></div>
<div class="abs" style="left:1163px;top:459px;width:14px;height:12px;background:#696969"></div>
<div class="list" style="left:1197px;top:301px;width:186px;height:163px">
<div class="it g bx" style="left:0;top:0px;width:226px;height:25px;border-width:2px"></div>
<div class="it g" style="left:0;top:25px;width:186px;height:22.5px"></div>
<div class="it g" style="left:0;top:47.5px;width:186px;height:22.5px"></div>
<div class="it d bx" style="left:0;top:70px;width:226px;height:25px;border-width:2px"></div>
<div class="it g bx" style="left:0;top:95px;width:226px;height:28px;border-width:3px"></div>
<div class="it d bx" style="left:0;top:123px;width:226px;height:27px;border-width:3px"></div>
<div class="it d bx" style="left:0;top:150px;width:226px;height:27px;border-width:3px"></div>
<div class="tx" style="left:2.6px;top:5px">2 Walk 15m or sprint, run sa</div>
<div class="tx" style="left:1.1px;top:29px">1 Record weight</div>
<div class="tx" style="left:1.1px;top:51px">1 Shoulder stretch</div>
<div class="tx" style="left:2.6px;top:74px">0 Mand shoulder therapy</div>
<div class="tx" style="left:3.9px;top:101px">1 Pull WO</div>
<div class="tx" style="left:3.6px;top:129px">0 Push WO</div>
<div class="tx" style="left:3.6px;top:157px">0 Leg WO</div>
</div>
<div class="sb" style="left:1383px;top:301px;width:21px;height:163px"></div><div class="sbb" style="left:1383px;top:301px;width:21px;height:18px"></div><div class="sbb" style="left:1383px;top:444px;width:21px;height:19px"></div><div class="th" style="left:1384px;top:322px;width:19px;height:37px"></div><svg class="abs" style="left:1386.5px;top:330.5px" width="14" height="16" viewBox="0 0 14 16"><path d="M0 .75h4.500M4 1.750h10M0 6.750h4.500M4 7.750h10M0 12.750h3.500M3 13.750h7M9.500 14.750h4.500" stroke="#7d7d73" stroke-width="1.500" fill="none"/></svg>
<div class="sb" style="left:1197px;top:464px;width:186px;height:21px"></div><div class="sbb" style="left:1197px;top:464px;width:19px;height:21px"></div><div class="sbb" style="left:1363px;top:464px;width:19px;height:21px"></div><div class="th" style="left:1218px;top:465px;width:99px;height:20px"></div><svg class="abs" style="left:1260.0px;top:467.5px" width="16" height="14" viewBox="0 0 16 14"><path d="M.75 0v4.500M1.750 4v10M6.750 0v4.500M7.750 4v10M12.750 0v3.500M13.750 3v7M14.750 9.500v4.500" stroke="#7d7d73" stroke-width="1.500" fill="none"/></svg>
<div class="panel" style="left:11px;top:504px;width:272px;height:225px"></div>
<div class="pt" style="left:147.5px;top:507.9px;transform:scaleX(0.735)">Sleep</div>
<div class="btn" style="left:19px;top:536px;width:42px;height:41px"></div>
<div class="btn" style="left:19px;top:584px;width:42px;height:41px"></div>
<div class="btn" style="left:19px;top:631px;width:42px;height:41px"></div>
<div class="btn" style="left:19px;top:679px;width:42px;height:41px"></div>


<div class="abs" style="left:32px;top:651px;width:16px;height:3px;background:#696969"></div>
<div class="abs" style="left:38.5px;top:645px;width:3px;height:15px;background:#696969"></div>
<div class="abs" style="left:33px;top:694px;width:14px;height:12px;background:#696969"></div>
<div class="list" style="left:67px;top:536px;width:207px;height:184px">
<div class="it g bx" style="left:0;top:0px;width:207px;height:25px;border-width:2px"></div>
<div class="it g" style="left:0;top:25px;width:207px;height:22.5px"></div>
<div class="it g" style="left:0;top:47.5px;width:207px;height:22.5px"></div>
<div class="it g bx" style="left:0;top:70px;width:207px;height:30px;border-width:4px"></div>
<div class="it d" style="left:0;top:100px;width:207px;height:23px"></div>
<div class="it g" style="left:0;top:123px;width:207px;height:22px"></div>
<div class="tx" style="left:2.9px;top:5px">1 Up before 8</div>
<div class="tx" style="left:1.1px;top:29px">1 Shower done</div>
<div class="tx" style="left:1.1px;top:51px">1 Fast shower</div>
<div class="tx" style="left:5.0px;top:78px">1 Bed before 11</div>
<div class="tx" style="left:0.8px;top:103px">0 No phone in bed</div>
<div class="tx" style="left:1.1px;top:125px">1 No reading in bed</div>
</div>
<div class="panel" style="left:293px;top:504px;width:273px;height:225px"></div>
<div class="pt" style="left:429.9px;top:507.9px;transform:scaleX(0.757)">Habits</div>
<div class="btn" style="left:302px;top:536px;width:41px;height:41px"></div>
<div class="btn" style="left:302px;top:584px;width:41px;height:41px"></div>
<div class="btn" style="left:302px;top:631px;width:41px;height:41px"></div>
<div class="btn" style="left:302px;top:679px;width:41px;height:41px"></div>


<div class="abs" style="left:315px;top:651px;width:16px;height:3px;background:#696969"></div>
<div class="abs" style="left:321.5px;top:645px;width:3px;height:15px;background:#696969"></div>
<div class="abs" style="left:316px;top:694px;width:14px;height:12px;background:#696969"></div>
<div class="list" style="left:349px;top:536px;width:187px;height:184px">
<div class="it g" style="left:0;top:0.0px;width:187px;height:22.5px"></div>
<div class="it g" style="left:0;top:22.5px;width:187px;height:22.5px"></div>
<div class="it g" style="left:0;top:45.0px;width:187px;height:22.5px"></div>
<div class="it g" style="left:0;top:67.5px;width:187px;height:22.5px"></div>
<div class="it g" style="left:0;top:90.0px;width:187px;height:22.5px"></div>
<div class="it g" style="left:0;top:112.5px;width:187px;height:22.5px"></div>
<div class="it g" style="left:0;top:135.0px;width:187px;height:22.5px"></div>
<div class="it d" style="left:0;top:157.5px;width:187px;height:26.5px"></div>
<div class="tx" style="left:2.0px;top:4px">1 No video games</div>
<div class="tx" style="left:2.0px;top:26px">1 No t</div>
<div class="tx" style="left:2.0px;top:49px">1 No n</div>
<div class="tx" style="left:2.0px;top:71px">1 Task 1</div>
<div class="tx" style="left:2.0px;top:94px">1 No qtip</div>
<div class="tx" style="left:2.0px;top:116px">1 No TV or movies</div>
<div class="tx" style="left:2.0px;top:138px">1 No crack neck</div>
<div class="tx" style="left:1.7px;top:161px">0 Less than 2 hr YT</div>
</div>
<div class="sb" style="left:536px;top:536px;width:21px;height:184px"></div><div class="sbb" style="left:536px;top:536px;width:21px;height:18px"></div><div class="sbb" style="left:536px;top:700px;width:21px;height:19px"></div><div class="th" style="left:537px;top:557px;width:19px;height:129px"></div><svg class="abs" style="left:539.5px;top:611.5px" width="14" height="16" viewBox="0 0 14 16"><path d="M0 .75h4.500M4 1.750h10M0 6.750h4.500M4 7.750h10M0 12.750h3.500M3 13.750h7M9.500 14.750h4.500" stroke="#7d7d73" stroke-width="1.500" fill="none"/></svg>
<div class="panel" style="left:576px;top:504px;width:272px;height:225px"></div>
<div class="pt" style="left:712.4px;top:507.9px;transform:scaleX(0.715)">Food</div>
<div class="btn" style="left:584px;top:536px;width:42px;height:41px"></div>
<div class="btn" style="left:584px;top:584px;width:42px;height:41px"></div>
<div class="btn" style="left:584px;top:631px;width:42px;height:41px"></div>
<div class="btn" style="left:584px;top:679px;width:42px;height:41px"></div>


<div class="abs" style="left:597px;top:651px;width:16px;height:3px;background:#696969"></div>
<div class="abs" style="left:603.5px;top:645px;width:3px;height:15px;background:#696969"></div>
<div class="abs" style="left:598px;top:694px;width:14px;height:12px;background:#696969"></div>
<div class="list" style="left:632px;top:536px;width:187px;height:163px">
<div class="it d bx" style="left:0;top:0px;width:227px;height:28px;border-width:3px"></div>
<div class="it g bx" style="left:0;top:28px;width:227px;height:25px;border-width:2px"></div>
<div class="it g" style="left:0;top:53px;width:187px;height:22.5px"></div>
<div class="it g" style="left:0;top:75.5px;width:187px;height:22.5px"></div>
<div class="it g" style="left:0;top:98px;width:187px;height:22.5px"></div>
<div class="it g" style="left:0;top:120.5px;width:187px;height:22.5px"></div>
<div class="it g" style="left:0;top:143px;width:187px;height:22.5px"></div>
<div class="tx" style="left:3.6px;top:6px">0 Buy groceries and no junk</div>
<div class="tx" style="left:2.9px;top:33px">1 Cook meal</div>
<div class="tx" style="left:1.1px;top:56px">1 No food after 8 PM</div>
<div class="tx" style="left:1.1px;top:78px">1 Home lunch</div>
<div class="tx" style="left:1.1px;top:101px">1 Home supper</div>
<div class="tx" style="left:0.8px;top:124px">2 Very healthy meal</div>
<div class="tx" style="left:1.1px;top:146px">1 Very few carbs</div>
</div>
<div class="sb" style="left:819px;top:536px;width:20px;height:163px"></div><div class="sbb" style="left:819px;top:536px;width:20px;height:18px"></div><div class="sbb" style="left:819px;top:679px;width:20px;height:19px"></div><div class="th" style="left:820px;top:557px;width:18px;height:44px"></div><svg class="abs" style="left:822.0px;top:569.0px" width="14" height="16" viewBox="0 0 14 16"><path d="M0 .75h4.500M4 1.750h10M0 6.750h4.500M4 7.750h10M0 12.750h3.500M3 13.750h7M9.500 14.750h4.500" stroke="#7d7d73" stroke-width="1.500" fill="none"/></svg>
<div class="sb" style="left:632px;top:699px;width:187px;height:21px"></div><div class="sbb" style="left:632px;top:699px;width:19px;height:21px"></div><div class="sbb" style="left:799px;top:699px;width:19px;height:21px"></div><div class="th" style="left:653px;top:700px;width:122px;height:20px"></div><svg class="abs" style="left:706.5px;top:702.5px" width="16" height="14" viewBox="0 0 16 14"><path d="M.75 0v4.500M1.750 4v10M6.750 0v4.500M7.750 4v10M12.750 0v3.500M13.750 3v7M14.750 9.500v4.500" stroke="#7d7d73" stroke-width="1.500" fill="none"/></svg>
<div class="panel" style="left:858px;top:504px;width:273px;height:225px"></div>
<div class="pt" style="left:994.9px;top:507.9px;transform:scaleX(0.779)">Money</div>
<div class="btn" style="left:867px;top:536px;width:41px;height:41px"></div>
<div class="btn" style="left:867px;top:584px;width:41px;height:41px"></div>
<div class="btn" style="left:867px;top:631px;width:41px;height:41px"></div>
<div class="btn" style="left:867px;top:679px;width:41px;height:41px"></div>


<div class="abs" style="left:880px;top:651px;width:16px;height:3px;background:#696969"></div>
<div class="abs" style="left:886.5px;top:645px;width:3px;height:15px;background:#696969"></div>
<div class="abs" style="left:881px;top:694px;width:14px;height:12px;background:#696969"></div>
<div class="list" style="left:914px;top:536px;width:208px;height:163px">
<div class="it g" style="left:0;top:0.0px;width:208px;height:22.5px"></div>
<div class="it d" style="left:0;top:22.5px;width:208px;height:22.5px"></div>
<div class="it g" style="left:0;top:45.0px;width:208px;height:22.5px"></div>
<div class="it d" style="left:0;top:67.5px;width:208px;height:22.5px"></div>
<div class="it d" style="left:0;top:90.0px;width:208px;height:22.5px"></div>
<div class="it d" style="left:0;top:112.5px;width:208px;height:22.5px"></div>
<div class="it d bx" style="left:0;top:135px;width:248px;height:25px;border-width:2px"></div>
<div class="it g" style="left:0;top:160px;width:208px;height:24px"></div>
<div class="tx" style="left:2.0px;top:4px">1 Spend nothing</div>
<div class="tx" style="left:1.7px;top:26px">0 Pay bill, cc, or tx $</div>
<div class="tx" style="left:2.0px;top:49px">1 Admin or errand</div>
<div class="tx" style="left:1.7px;top:71px">0 Order or schedule something <span style="color:#2b3fa8">in</span></div>
<div class="tx" style="left:1.7px;top:94px">0 Pick up something important</div>
<div class="tx" style="left:1.7px;top:116px">0 Budgeting 15m or catch up</div>
<div class="tx" style="left:2.6px;top:139px">0 Security thing</div>
</div>
<div class="sb" style="left:914px;top:699px;width:208px;height:21px"></div><div class="sbb" style="left:914px;top:699px;width:19px;height:21px"></div><div class="sbb" style="left:1102px;top:699px;width:19px;height:21px"></div><div class="th" style="left:935px;top:700px;width:126px;height:20px"></div><svg class="abs" style="left:990.5px;top:702.5px" width="16" height="14" viewBox="0 0 16 14"><path d="M.75 0v4.500M1.750 4v10M6.750 0v4.500M7.750 4v10M12.750 0v3.500M13.750 3v7M14.750 9.500v4.500" stroke="#7d7d73" stroke-width="1.500" fill="none"/></svg>
<div class="panel" style="left:1141px;top:504px;width:272px;height:225px"></div>
<div class="pt" style="left:1277.7px;top:507.9px;transform:scaleX(0.839)">Weekly or Other Chores</div>
<div class="btn" style="left:1149px;top:536px;width:42px;height:41px"></div>
<div class="btn" style="left:1149px;top:584px;width:42px;height:41px"></div>
<div class="btn" style="left:1149px;top:631px;width:42px;height:41px"></div>
<div class="btn" style="left:1149px;top:679px;width:42px;height:41px"></div>


<div class="abs" style="left:1162px;top:651px;width:16px;height:3px;background:#696969"></div>
<div class="abs" style="left:1168.5px;top:645px;width:3px;height:15px;background:#696969"></div>
<div class="abs" style="left:1163px;top:694px;width:14px;height:12px;background:#696969"></div>
<div class="list" style="left:1197px;top:536px;width:186px;height:184px">
<div class="it d bx" style="left:0;top:0px;width:186px;height:25px;border-width:2px"></div>
<div class="it d bx" style="left:0;top:25px;width:186px;height:28px;border-width:3px"></div>
<div class="it d" style="left:0;top:53px;width:186px;height:23px"></div>
<div class="it d bx" style="left:0;top:76px;width:186px;height:24px;border-width:2px"></div>
<div class="it d" style="left:0;top:100px;width:186px;height:23px"></div>
<div class="it d bx" style="left:0;top:123px;width:186px;height:25px;border-width:2px"></div>
<div class="it d" style="left:0;top:148px;width:186px;height:22px"></div>
<div class="it d bx" style="left:0;top:170px;width:186px;height:27px;border-width:2px"></div>
<div class="tx" style="left:2.6px;top:5px">0 Vacuum 1 room</div>
<div class="tx" style="left:3.6px;top:31px">0 Clean fish tank</div>
<div class="tx" style="left:0.8px;top:55px">0 Move or declutter</div>
<div class="tx" style="left:2.6px;top:79px">0 Fix something</div>
<div class="tx" style="left:0.8px;top:103px">0 Sweep</div>
<div class="tx" style="left:2.6px;top:128px">0 Clean</div>
<div class="tx" style="left:0.8px;top:150px">0 Make something</div>
<div class="tx" style="left:2.6px;top:176px">0 Backup laptop</div>
</div>
<div class="sb" style="left:1383px;top:536px;width:21px;height:184px"></div><div class="sbb" style="left:1383px;top:536px;width:21px;height:18px"></div><div class="sbb" style="left:1383px;top:700px;width:21px;height:19px"></div><div class="th" style="left:1384px;top:557px;width:19px;height:68px"></div><svg class="abs" style="left:1386.5px;top:581.0px" width="14" height="16" viewBox="0 0 14 16"><path d="M0 .75h4.500M4 1.750h10M0 6.750h4.500M4 7.750h10M0 12.750h3.500M3 13.750h7M9.500 14.750h4.500" stroke="#7d7d73" stroke-width="1.500" fill="none"/></svg>
<div class="panel" style="left:11px;top:739px;width:272px;height:225px"></div>
<div class="panel" style="left:293px;top:739px;width:273px;height:225px"></div>
<div class="panel" style="left:576px;top:739px;width:272px;height:225px"></div>
<div class="panel" style="left:858px;top:739px;width:273px;height:225px"></div>
<div class="panel" style="left:1141px;top:739px;width:272px;height:225px"></div>
<svg class="abs" style="left:0;top:0;pointer-events:none" width="1446" height="742" fill="#696969"><polygon points="32.5,329 46.900000000000006,329 39.7,317"/><polygon points="32.5,363.8 46.900000000000006,363.8 39.7,376.1"/><polygon points="315.5,329 329.9,329 322.7,317"/><polygon points="315.5,363.8 329.9,363.8 322.7,376.1"/><polygon points="597.5,329 611.9000000000001,329 604.7,317"/><polygon points="597.5,363.8 611.9000000000001,363.8 604.7,376.1"/><polygon points="880.5,329 894.9000000000001,329 887.7,317"/><polygon points="880.5,363.8 894.9000000000001,363.8 887.7,376.1"/><polygon points="1162.5,329 1176.9,329 1169.7,317"/><polygon points="1162.5,363.8 1176.9,363.8 1169.7,376.1"/><polygon points="32.5,564 46.900000000000006,564 39.7,552"/><polygon points="32.5,598.8 46.900000000000006,598.8 39.7,611.0999999999999"/><polygon points="315.5,564 329.9,564 322.7,552"/><polygon points="315.5,598.8 329.9,598.8 322.7,611.0999999999999"/><polygon points="597.5,564 611.9000000000001,564 604.7,552"/><polygon points="597.5,598.8 611.9000000000001,598.8 604.7,611.0999999999999"/><polygon points="880.5,564 894.9000000000001,564 887.7,552"/><polygon points="880.5,598.8 894.9000000000001,598.8 887.7,611.0999999999999"/><polygon points="1162.5,564 1176.9,564 1169.7,552"/><polygon points="1162.5,598.8 1176.9,598.8 1169.7,611.0999999999999"/><polygon points="1430.0,271 1439.0,271 1434.5,266.5"/><polygon points="1430.0,728.5 1439.0,728.5 1434.5,733.0"/><polygon points="259.0,313.5 268.0,313.5 263.5,309.0"/><polygon points="259.0,473 268.0,473 263.5,477.5"/><polygon points="1107.0,313.5 1116.0,313.5 1111.5,309.0"/><polygon points="1107.0,473 1116.0,473 1111.5,477.5"/><polygon points="1389.0,313.5 1398.0,313.5 1393.5,309.0"/><polygon points="1389.0,452 1398.0,452 1393.5,456.5"/><polygon points="1208,470.0 1208,479.0 1203.5,474.5"/><polygon points="1371,470.0 1371,479.0 1375.5,474.5"/><polygon points="542.0,548.5 551.0,548.5 546.5,544.0"/><polygon points="542.0,708 551.0,708 546.5,712.5"/><polygon points="824.5,548.5 833.5,548.5 829.0,544.0"/><polygon points="824.5,687 833.5,687 829.0,691.5"/><polygon points="643,705.0 643,714.0 638.5,709.5"/><polygon points="807,705.0 807,714.0 811.5,709.5"/><polygon points="925,705.0 925,714.0 920.5,709.5"/><polygon points="1110,705.0 1110,714.0 1114.5,709.5"/><polygon points="1389.0,548.5 1398.0,548.5 1393.5,544.0"/><polygon points="1389.0,708 1398.0,708 1393.5,712.5"/></svg>
</div></div></body></html>
